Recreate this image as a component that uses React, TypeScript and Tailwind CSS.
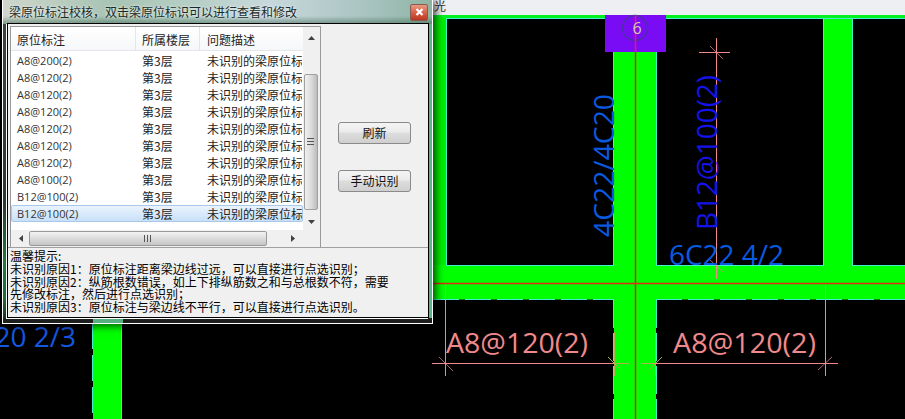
import React from "react";

const rows = [
  "A8@200(2)", "A8@120(2)", "A8@120(2)", "A8@120(2)", "A8@120(2)",
  "A8@120(2)", "A8@120(2)", "A8@100(2)", "B12@100(2)", "B12@100(2)",
];

const PINK = "#f08a8a";
const CYAN = "#40f0d0";
const AXIS = "#e02c10";

function Cad() {
  const font = { fontFamily: "'Open Sans', sans-serif", fontSize: 28 };
  return (
    <svg className="absolute left-0 top-0" width="905" height="419" viewBox="0 0 905 419">
      <rect x="0" y="0" width="905" height="419" fill="#000" />
      <rect x="433" y="0" width="472" height="15" fill="#eeeff2" />
      <text x="434" y="11" fontSize="12" fill="#333" fontFamily="'Noto Sans CJK SC', sans-serif">光</text>
      {/* beams */}
      <rect x="433" y="15" width="472" height="3" fill="#00f020" />
      <rect x="433" y="18" width="13" height="250" fill="#00f000" />
      <rect x="614" y="50" width="42" height="369" fill="#00ff00" />
      <rect x="824" y="18" width="28" height="250" fill="#00ff00" />
      <rect x="433" y="265" width="472" height="34.5" fill="#00ff00" />
      <rect x="93" y="323" width="28" height="96" fill="#00ff00" />
      {/* edges */}
      <g stroke={CYAN} strokeWidth="1" fill="none">
        <line x1="446" y1="18.5" x2="614" y2="18.5" />
        <line x1="656" y1="18.5" x2="905" y2="18.5" />
        <line x1="446.5" y1="18" x2="446.5" y2="265" />
        <line x1="613.5" y1="50" x2="613.5" y2="265" />
        <line x1="656.5" y1="50" x2="656.5" y2="265" />
        <line x1="823.5" y1="18" x2="823.5" y2="265" />
        <line x1="852.5" y1="18" x2="852.5" y2="265" />
        <line x1="446" y1="265.5" x2="614" y2="265.5" />
        <line x1="656" y1="265.5" x2="824" y2="265.5" />
        <line x1="852" y1="265.5" x2="905" y2="265.5" />
        <line x1="433" y1="299.5" x2="614" y2="299.5" strokeDasharray="26 6" />
        <line x1="656" y1="299.5" x2="905" y2="299.5" strokeDasharray="26 6" />
        <line x1="613.5" y1="300" x2="613.5" y2="419" strokeDasharray="28 5" />
        <line x1="656.5" y1="300" x2="656.5" y2="419" strokeDasharray="28 5" />
        <line x1="92.5" y1="323" x2="92.5" y2="419" strokeDasharray="26 6" />
        <line x1="121.5" y1="323" x2="121.5" y2="419" />
      </g>
      {/* axis box */}
      <rect x="605" y="15" width="61" height="37" fill="#7a0cf5" />
      <circle cx="635" cy="28" r="12.5" fill="none" stroke="#4a30a8" strokeWidth="1.5" />
      <line x1="635.5" y1="15" x2="635.5" y2="52" stroke="#f01070" strokeWidth="1.5" />
      <text x="637" y="34" textAnchor="middle" fontSize="16" fill="#d8c8b0" fontFamily="'Open Sans', sans-serif">6</text>
      {/* axis lines */}
      <line x1="635.5" y1="52" x2="635.5" y2="419" stroke={AXIS} strokeWidth="1.5" />
      <line x1="433" y1="283.5" x2="905" y2="283.5" stroke={AXIS} strokeWidth="1.5" />
      {/* dimensions */}
      <g stroke={PINK} strokeWidth="1">
        <line x1="445.5" y1="285" x2="445.5" y2="376" />
        <line x1="825.5" y1="285" x2="825.5" y2="376" />
        <line x1="716.5" y1="38" x2="716.5" y2="279" />
        <line x1="432" y1="363.5" x2="614" y2="363.5" />
        <line x1="656" y1="363.5" x2="838" y2="363.5" />
        <line x1="699" y1="52.5" x2="730" y2="52.5" />
      </g>
      <g stroke={PINK} strokeWidth="1" strokeOpacity="0.7">
        <line x1="439" y1="357" x2="453" y2="371" />
        <line x1="818" y1="370" x2="832" y2="357" />
        <line x1="710" y1="46" x2="723" y2="59" />
        <line x1="709" y1="259" x2="723" y2="272" />
      </g>
      <g stroke="#b0b050" strokeWidth="1">
        <line x1="614.5" y1="332" x2="614.5" y2="376" />
        <line x1="655.5" y1="332" x2="655.5" y2="376" />
        <line x1="614" y1="363.5" x2="629" y2="363.5" />
        <line x1="641" y1="363.5" x2="656" y2="363.5" />
        <line x1="608" y1="357" x2="620" y2="369" />
        <line x1="650" y1="369" x2="662" y2="357" />
      </g>
      {/* texts */}
      <g {...font}>
        <text x="669" y="265" fill="#0a5ae0" textLength="115" lengthAdjust="spacingAndGlyphs">6C22 4/2</text>
        <text x="446" y="353" fill={PINK} textLength="142" lengthAdjust="spacingAndGlyphs">A8@120(2)</text>
        <text x="673" y="353" fill={PINK} textLength="143" lengthAdjust="spacingAndGlyphs">A8@120(2)</text>
        <text x="76" y="347" textAnchor="end" fill="#1458e0">20 2/3</text>
        <text transform="translate(614 237) rotate(-90)" fill="#0a5ae0" textLength="143" lengthAdjust="spacingAndGlyphs">4C22/4C20</text>
        <text transform="translate(717 230) rotate(-90)" fill="#1414e8" textLength="155" lengthAdjust="spacingAndGlyphs">B12@100(2)</text>
      </g>
    </svg>
  );
}

function Tri({ dir }: { dir: "up" | "down" | "left" | "right" }) {
  const pts = { up: "0,4 7,4 3.5,0", down: "0,0 7,0 3.5,4", left: "4,0 4,7 0,3.5", right: "0,0 0,7 4,3.5" }[dir];
  const w = dir === "up" || dir === "down" ? 7 : 4;
  const h = dir === "up" || dir === "down" ? 4 : 7;
  return (
    <svg width={w} height={h} viewBox={`0 0 ${w} ${h}`}>
      <polygon points={pts} fill="#404040" />
    </svg>
  );
}

function Button({ label }: { label: string }) {
  return (
    <button className="flex h-[22px] w-[73px] items-center justify-center rounded-[3px] border border-[#8a8a8a] bg-[linear-gradient(#f4f4f4_0%,#ebebeb_45%,#dddddd_50%,#cfcfcf_100%)] text-[12px] leading-none text-[#111]">
      {label}
    </button>
  );
}

export default function App() {
  const ui = { fontFamily: "'Noto Sans CJK SC', sans-serif" };
  return (
    <div className="relative h-[419px] w-[905px] overflow-hidden bg-black" style={ui}>
      <Cad />

      {/* dialog window */}
      <div className="absolute left-[2px] top-[-1px] flex h-[325px] w-[431px] flex-col border border-white bg-[linear-gradient(90deg,#303a36_0px,#303a36_5px,#5db58c_420px,#5db58c_100%)] shadow-[3px_2px_8px_rgba(0,0,0,0.7)]">
        {/* glass tints */}
        <div className="absolute bottom-0 left-0 top-[24px] w-[4px] bg-[linear-gradient(#39443e_0%,#2c3a34_60%,#1f7a3c_80%,#1c6a38_92%,#222_100%)]" />
        <div className="absolute inset-x-0 bottom-0 h-[5px] bg-[#1c1f1e]" />
        <div className="absolute bottom-0 left-[90px] h-[4px] w-[30px] bg-[#58b080]" />
        {/* title bar */}
        <div className="absolute inset-x-0 top-0 h-[24px] bg-[linear-gradient(90deg,#cfd6cc_0%,#a8c4b4_25%,#b6cfc6_45%,#c8d8dc_62%,#a8c4c0_85%,#8fb4a4_100%)]" />
        <div className="absolute inset-x-0 top-[16px] h-[8px] bg-[linear-gradient(rgba(60,100,80,0),rgba(60,100,80,0.55))]" />
        <div className="relative flex h-[23px] shrink-0 items-center pl-[6px] pr-[4px] pt-[1px]">
          <span className="whitespace-nowrap text-[12px] leading-none text-[#1a2a28] [text-shadow:0_0_3px_#ffffff]">
            梁原位标注校核，双击梁原位标识可以进行查看和修改
          </span>
          <div className="ml-auto flex h-[17px] w-[18px] items-center justify-center rounded-[2px] border border-[#8a5a50] bg-[linear-gradient(#e89a84_0%,#d8604a_50%,#b83820_100%)]">
            <svg width="9" height="8" viewBox="0 0 9 8">
              <path d="M1.5 1 L7.5 7 M7.5 1 L1.5 7" stroke="#fff" strokeWidth="2.2" />
            </svg>
          </div>
        </div>

        {/* client */}
        <div className="relative ml-[4px] mr-[3px] flex h-[295px] flex-col border border-black bg-[#f0f0f0] shadow-[-1px_1px_0_0_#ffffff]">
          <div className="flex h-[224px] shrink-0 border-b border-[#a0a0a0]">
            <div className="ml-[2px] mt-[2px] flex h-[221px] w-[311px] shrink-0 border-x border-t border-[#9a9a9a]">
              <div className="flex w-[292px] shrink-0 flex-col">
                <div className="h-[203px] overflow-hidden bg-white">
                  <div className="flex h-[24px] items-center border-b border-[#e4e6ea] bg-[linear-gradient(#ffffff,#f6f7f9)] text-[12px] leading-none text-[#222]">
                    <div className="flex h-full w-[125px] items-center border-r border-[#e4e6ea] pl-[6px] pt-[2px]">原位标注</div>
                    <div className="flex h-full w-[64px] items-center border-r border-[#e4e6ea] pl-[6px] pt-[2px]">所属楼层</div>
                    <div className="flex h-full flex-1 items-center pl-[7px] pt-[2px]">问题描述</div>
                  </div>
                  <div className="pt-[1px]">
                    {rows.map((r, i) => (
                      <div
                        key={i}
                        className={
                          i === 9
                            ? "flex h-[17px] items-center rounded-[2px] border border-[#a8c8ea] bg-[linear-gradient(#eaf3fd,#c8e0f8)] text-[#222]"
                            : "flex h-[17px] items-center border border-transparent text-[#222]"
                        }
                      >
                        <span className="w-[124px] whitespace-nowrap pl-[5px] text-[11px] leading-none text-[#333]" style={{ fontFamily: "'Open Sans', sans-serif" }}>{r}</span>
                        <span className="w-[65px] whitespace-nowrap pl-[6px] text-[12px] leading-none">第3层</span>
                        <span className="flex-1 overflow-hidden whitespace-nowrap pl-[6px] text-[12px] leading-none">未识别的梁原位标注</span>
                      </div>
                    ))}
                  </div>
                </div>
                {/* horizontal scrollbar */}
                <div className="flex h-[17px] items-center bg-[#f0f0f0]">
                  <div className="flex w-[18px] shrink-0 justify-center pl-[2px]"><Tri dir="left" /></div>
                  <div className="flex h-[15px] w-[238px] shrink-0 items-center justify-center rounded-[2px] border border-[#9a9a9a] bg-[linear-gradient(#f2f2f2,#dcdcdc_50%,#c4c4c4)]">
                    <svg width="8" height="7" viewBox="0 0 8 7">
                      <path d="M0.5 0V7M3.5 0V7M6.5 0V7" stroke="#555" strokeWidth="1" />
                    </svg>
                  </div>
                  <div className="flex flex-1 justify-end pr-[8px]"><Tri dir="right" /></div>
                </div>
              </div>
              {/* vertical scrollbar */}
              <div className="flex w-[17px] shrink-0 flex-col items-center bg-[#f0f0f0]">
                <div className="flex h-[21px] shrink-0 items-center justify-center pt-[1px]"><Tri dir="up" /></div>
                <div className="ml-[-2px] mt-[26px] flex h-[136px] w-[14px] shrink-0 items-center justify-center rounded-[2px] border border-[#a0a0a0] bg-[linear-gradient(90deg,#f0f0f0,#dcdcdc_50%,#bcbcbc)]">
                  <svg width="7" height="8" viewBox="0 0 7 8">
                    <path d="M0 0.5H7M0 3.5H7M0 6.5H7" stroke="#555" strokeWidth="1" />
                  </svg>
                </div>
                <div className="mt-[10px] flex justify-center"><Tri dir="down" /></div>
              </div>
            </div>
            <div className="flex flex-1 flex-col gap-[26px] pl-[17px] pt-[98px]">
              <Button label="刷新" />
              <Button label="手动识别" />
            </div>
          </div>
          <div className="whitespace-nowrap pl-[2px] pt-[2px] text-[12px] leading-[12.8px] text-black">
            <div>温馨提示:</div>
            <div>未识别原因1：原位标注距离梁边线过远，可以直接进行点选识别；</div>
            <div>未识别原因2：纵筋根数错误，如上下排纵筋数之和与总根数不符，需要</div>
            <div>先修改标注，然后进行点选识别；</div>
            <div>未识别原因3：原位标注与梁边线不平行，可以直接进行点选识别。</div>
          </div>
        </div>
      </div>
    </div>
  );
}
